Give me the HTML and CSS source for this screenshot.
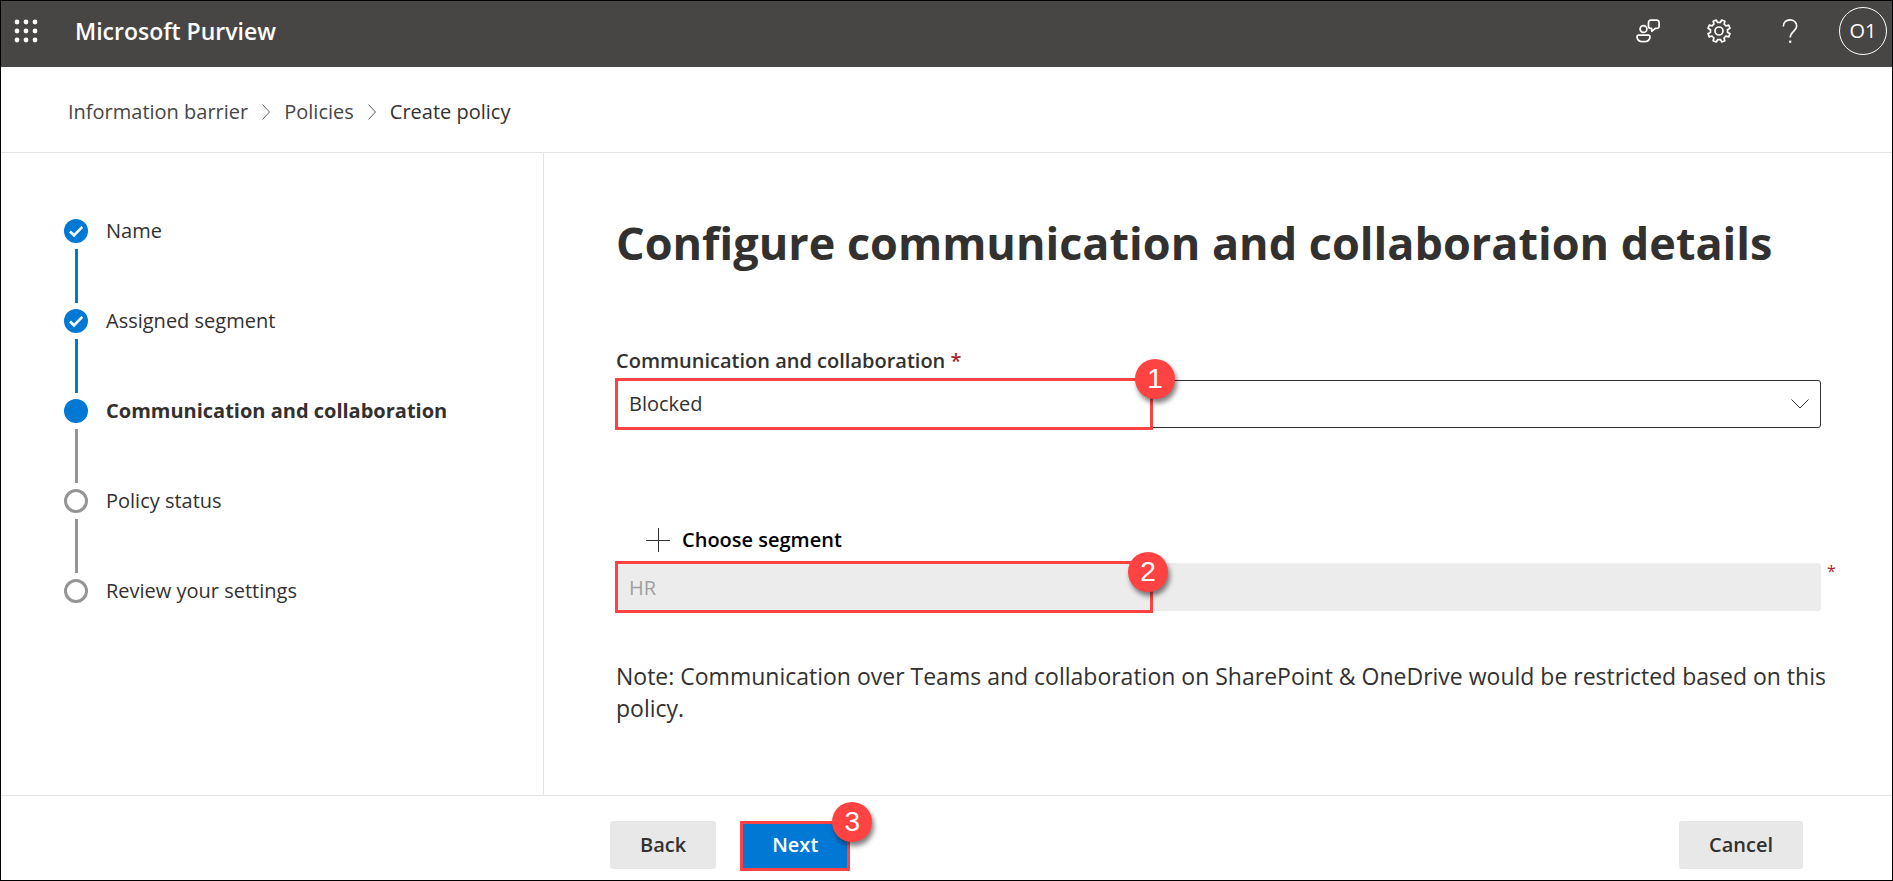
FILE: index.html
```html
<!DOCTYPE html>
<html lang="en">
<head>
<meta charset="utf-8">
<title>Microsoft Purview</title>
<link rel="stylesheet" href="styles.css">
</head>
<body>
<div class="app">
  <header class="topbar">
    <button class="icon-button waffle" type="button" aria-label="App launcher">
      <svg width="24" height="24" viewBox="0 0 24 24" fill="currentColor" aria-hidden="true">
        <circle cx="3" cy="3" r="2.4"/><circle cx="12" cy="3" r="2.4"/><circle cx="21" cy="3" r="2.4"/>
        <circle cx="3" cy="12" r="2.4"/><circle cx="12" cy="12" r="2.4"/><circle cx="21" cy="12" r="2.4"/>
        <circle cx="3" cy="21" r="2.4"/><circle cx="12" cy="21" r="2.4"/><circle cx="21" cy="21" r="2.4"/>
      </svg>
    </button>
    <span class="brand">Microsoft Purview</span>
    <div class="tools">
      <button class="icon-button" type="button" aria-label="Feedback">
        <svg width="24" height="24" viewBox="0 0 24 24" fill="none" stroke="currentColor" stroke-width="1.7" stroke-linejoin="round" aria-hidden="true">
          <circle cx="7.5" cy="10" r="3.4"/>
          <path d="M2.500 16.200h10a1.500 1.500 0 0 1 1.500 1.500c0 3-2.400 5-6.500 5s-6.500-2-6.500-5A1.500 1.500 0 0 1 2.500 16.200z"/>
          <path d="M14.700 1.200h6.200a2.200 2.200 0 0 1 2.200 2.200v3.800a2.200 2.200 0 0 1-2.200 2.200h-1.500l-3.700 2.900V9.400h-1a2.200 2.200 0 0 1-2.200-2.200V3.400a2.200 2.200 0 0 1 2.200-2.200z"/>
        </svg>
      </button>
      <button class="icon-button" type="button" aria-label="Settings">
        <svg width="24" height="24" viewBox="0 0 24 24" fill="none" stroke="currentColor" stroke-width="1.700" stroke-linejoin="round" aria-hidden="true">
          <circle cx="12" cy="12" r="4"/>
          <path d="M23.200 10.300V13.700L20.300 14.100A8.600 8.600 0 0 1 19.300 16.500L21.100 18.700L18.700 21.100L16.500 19.300A8.600 8.600 0 0 1 14.100 20.300L13.700 23.200H10.300L9.900 20.300A8.600 8.600 0 0 1 7.500 19.300L5.300 21.100L2.900 18.700L4.700 16.500A8.600 8.600 0 0 1 3.700 14.100L.8 13.700V10.300L3.700 9.900A8.600 8.600 0 0 1 4.700 7.500L2.900 5.300L5.300 2.900L7.500 4.700A8.600 8.600 0 0 1 9.900 3.700L10.300 .8H13.700L14.100 3.700A8.600 8.600 0 0 1 16.500 4.700L18.700 2.900L21.100 5.300L19.300 7.500A8.600 8.600 0 0 1 20.300 9.900Z" transform="rotate(22.500 12 12)"/>
        </svg>
      </button>
      <button class="icon-button" type="button" aria-label="Help">
        <svg width="24" height="24" viewBox="0 0 24 24" fill="none" stroke="currentColor" stroke-width="1.600" aria-hidden="true">
          <path d="M5.300 7.500C5.300 3.500 8.200.9 12 .9s6.700 2.500 6.700 6.100c0 5-6.500 6-6.500 11.500"/>
          <path d="M12.200 21.600v2.200" stroke-width="2.200"/>
        </svg>
      </button>
    </div>
    <button class="avatar" type="button" aria-label="Account O1">O1</button>
  </header>

  <nav class="breadcrumb" aria-label="Breadcrumb">
    <a href="#">Information barrier</a>
    <svg class="sep" width="8" height="16" viewBox="0 0 8 16" aria-hidden="true"><path d="M.5 .5L7.500 8L.5 15.500"/></svg>
    <a href="#">Policies</a>
    <svg class="sep" width="8" height="16" viewBox="0 0 8 16" aria-hidden="true"><path d="M.5 .5L7.500 8L.5 15.500"/></svg>
    <a class="here" href="#" aria-current="page">Create policy</a>
  </nav>

  <div class="body">
    <aside class="sidebar">
      <ol class="steps">
        <li class="step done"><span class="dot"><svg width="24" height="24" viewBox="0 0 24 24" aria-hidden="true"><path d="M6 12.500L10 16.300L18.300 7.800"/></svg></span><span>Name</span></li>
        <li class="step done"><span class="dot"><svg width="24" height="24" viewBox="0 0 24 24" aria-hidden="true"><path d="M6 12.500L10 16.300L18.300 7.800"/></svg></span><span>Assigned segment</span></li>
        <li class="step current" aria-current="step"><span class="dot"></span><span>Communication and collaboration</span></li>
        <li class="step"><span class="dot"></span><span>Policy status</span></li>
        <li class="step"><span class="dot"></span><span>Review your settings</span></li>
      </ol>
    </aside>

    <main class="content">
      <h1>Configure communication and collaboration details</h1>
      <label class="label" for="mode">Communication and collaboration <span class="required">*</span></label>
      <div class="field">
        <select id="mode" class="control"><option>Blocked</option></select>
        <svg class="caret" width="18" height="10" viewBox="0 0 18 10" aria-hidden="true"><path d="M.5 .5L9 9L17.500 .5"/></svg>
        <span class="highlight"><span class="badge">1</span></span>
      </div>
      <button class="choose" type="button">
        <svg width="24" height="24" viewBox="0 0 24 24" aria-hidden="true"><path d="M12.500 0V24M0 12.500H24"/></svg>
        Choose segment
      </button>
      <div class="field">
        <input class="control segment" type="text" value="HR" aria-label="Segment" disabled>
        <span class="required mark">*</span>
        <span class="highlight"><span class="badge inset">2</span></span>
      </div>
      <p class="note">Note: Communication over Teams and collaboration on SharePoint &amp; OneDrive would be restricted based on this policy.</p>
    </main>
  </div>

  <footer class="footer">
    <button class="button" type="button">Back</button>
    <div class="next">
      <button class="button primary" type="button">Next</button>
      <span class="highlight"><span class="badge">3</span></span>
    </div>
    <button class="button cancel" type="button">Cancel</button>
  </footer>
</div>
</body>
</html>
```
FILE: styles.css
```css
* { box-sizing: border-box; }

body {
  margin: 0;
  font-family: "Open Sans", "Noto Sans", sans-serif;
  font-size: 20px;
  line-height: 28px;
  color: #323130;
  background: #fff;
}

button, select, input { font: inherit; color: inherit; }
button { border: 0; padding: 0; background: none; cursor: pointer; }
a { color: inherit; text-decoration: none; }

.app {
  display: flex;
  flex-direction: column;
  min-height: 100vh;
  border: 1px solid #000;
}

/* Top bar */
.topbar {
  display: flex;
  align-items: center;
  padding: 6px 5px 12px 13px;
  color: #fff;
  background: #484644;
}
.icon-button { display: flex; }
.brand { margin-left: 37px; font-size: 23px; font-weight: 600; }
.tools { display: flex; align-items: center; gap: 47px; margin: 0 37px 0 auto; }
.avatar {
  width: 48px;
  height: 48px;
  border: 1px solid #fff;
  border-radius: 50%;
}

/* Breadcrumb */
.breadcrumb {
  display: flex;
  align-items: center;
  gap: 14px;
  padding: 31px 67px 26px;
  border-bottom: 1px solid #e5e5e5;
  color: #484644;
}
.here { color: #323130; }
.sep { fill: none; stroke: #605e5c; }

/* Wizard */
.body { display: flex; flex: 1; }
.sidebar {
  flex: 0 0 543px;
  padding: 64px 63px;
  border-right: 1px solid #e5e5e5;
}
.steps { margin: 0; padding: 0; list-style: none; }
.step {
  position: relative;
  display: flex;
  align-items: center;
  gap: 18px;
  padding-bottom: 62px;
}
.step:last-child { padding-bottom: 0; }
.step::after {
  content: "";
  position: absolute;
  left: 11px;
  top: 32px;
  bottom: 4px;
  width: 3px;
  background: #979593;
}
.step:last-child::after { display: none; }
.step.done::after { background: #0078d4; }
.dot {
  display: flex;
  width: 24px;
  height: 24px;
  border: 3px solid #979593;
  border-radius: 50%;
}
.done .dot, .current .dot { border: 0; background: #0078d4; }
.dot path { fill: none; stroke: #fff; stroke-width: 2.600; }
.current { font-weight: 700; }

.content { flex: 1; min-width: 0; padding: 58px 71px 40px 72px; }
h1 { margin: 0 0 72px; font-size: 45px; line-height: 64px; font-weight: 700; }
.label { display: block; margin-bottom: 5px; font-weight: 600; }
.required { color: #a4262c; }

.field { position: relative; }
.control {
  display: block;
  width: 100%;
  height: 48px;
  padding: 0 12px;
  border: 1px solid #323130;
  border-radius: 3px;
  background: #fff;
  appearance: none;
}
.control.segment { border-color: #ececec; background: #ececec; color: #a19f9d; }
.caret {
  position: absolute;
  top: 19px;
  right: 12px;
  fill: none;
  stroke: #323130;
  pointer-events: none;
}
.mark { position: absolute; top: 0; left: 100%; margin-left: 6px; font-size: 16px; line-height: 16px; }
.choose {
  display: flex;
  align-items: center;
  gap: 12px;
  margin: 98px 0 9px 30px;
  font-weight: 600;
  color: #000;
}
.choose path { fill: none; stroke: #323130; }
.note { margin: 49px -16px 0 0; font-size: 23px; line-height: 32px; }

/* Numbered callouts */
.highlight {
  position: absolute;
  top: -2px;
  left: -1px;
  width: 538px;
  height: 52px;
  border: 3px solid #ff4343;
  pointer-events: none;
}
.badge {
  position: absolute;
  top: -22px;
  right: -25px;
  width: 40px;
  height: 40px;
  border-radius: 50%;
  background: #ff4343;
  box-shadow: 2px 4px 5px rgba(0, 0, 0, 0.5);
  color: #fff;
  font-family: "Liberation Sans", sans-serif;
  font-size: 28px;
  line-height: 40px;
  text-align: center;
}
.badge.inset { top: -12px; right: -18px; }

/* Footer */
.footer {
  display: flex;
  gap: 24px;
  padding: 25px 89px 11px 609px;
  border-top: 1px solid #e5e5e5;
}
.button {
  height: 48px;
  padding: 0 30px;
  border-radius: 3px;
  background: #e8e8e8;
  font-weight: 600;
}
.primary { padding: 0 32px; background: #0078d4; color: #fff; }
.next { position: relative; }
.next .highlight { top: 0; left: 0; width: 100%; height: 50px; }
.cancel { margin-left: auto; }
```
